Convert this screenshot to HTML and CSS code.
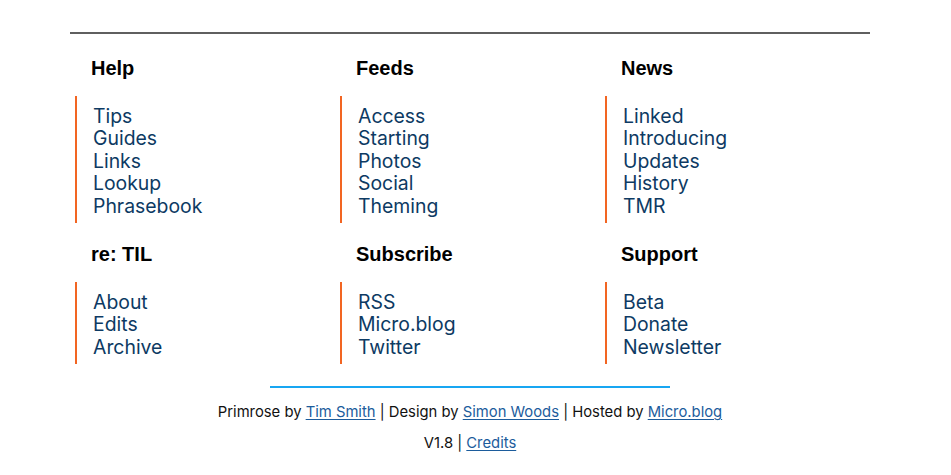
FILE: index.html
```html
<!DOCTYPE html>
<html lang="en">
<head>
<meta charset="utf-8">
<title>Footer</title>
<link rel="stylesheet" href="styles.css">
</head>
<body>
<div class="page">
  <footer class="site-footer">
    <div class="menus">
      <section class="menu">
        <h3 class="menu-title">Help</h3>
        <ul class="menu-list">
          <li><a href="#">Tips</a></li>
          <li><a href="#">Guides</a></li>
          <li><a href="#">Links</a></li>
          <li><a href="#">Lookup</a></li>
          <li><a href="#">Phrasebook</a></li>
        </ul>
      </section>
      <section class="menu">
        <h3 class="menu-title">Feeds</h3>
        <ul class="menu-list">
          <li><a href="#">Access</a></li>
          <li><a href="#">Starting</a></li>
          <li><a href="#">Photos</a></li>
          <li><a href="#">Social</a></li>
          <li><a href="#">Theming</a></li>
        </ul>
      </section>
      <section class="menu">
        <h3 class="menu-title">News</h3>
        <ul class="menu-list">
          <li><a href="#">Linked</a></li>
          <li><a href="#">Introducing</a></li>
          <li><a href="#">Updates</a></li>
          <li><a href="#">History</a></li>
          <li><a href="#">TMR</a></li>
        </ul>
      </section>
      <section class="menu">
        <h3 class="menu-title">re: TIL</h3>
        <ul class="menu-list">
          <li><a href="#">About</a></li>
          <li><a href="#">Edits</a></li>
          <li><a href="#">Archive</a></li>
        </ul>
      </section>
      <section class="menu">
        <h3 class="menu-title">Subscribe</h3>
        <ul class="menu-list">
          <li><a href="#">RSS</a></li>
          <li><a href="#">Micro.blog</a></li>
          <li><a href="#">Twitter</a></li>
        </ul>
      </section>
      <section class="menu">
        <h3 class="menu-title">Support</h3>
        <ul class="menu-list">
          <li><a href="#">Beta</a></li>
          <li><a href="#">Donate</a></li>
          <li><a href="#">Newsletter</a></li>
        </ul>
      </section>
    </div>
    <div class="credits">
      <p class="credit-line">Primrose by <a href="#">Tim Smith</a> | Design by <a href="#">Simon Woods</a> | Hosted by <a href="#">Micro.blog</a></p>
      <p class="credit-line">V1.8 | <a href="#">Credits</a></p>
    </div>
  </footer>
</div>
</body>
</html>
```

FILE: styles.css
```css
html, body {
  margin: 0;
  padding: 0;
  background: #fff;
}

body {
  font-family: Inter, "Noto Sans", sans-serif;
  color: #111;
}

.page {
  width: 940px;
}

.site-footer {
  width: 800px;
  margin: 32px auto 0;
  border-top: 2px solid #5f5f5f;
}

.menus {
  display: grid;
  grid-template-columns: 265px 265px 270px;
  padding-top: 19px;
}

.menu {
  padding-left: 5px;
}

.menu-title {
  margin: 0 0 13px 16px;
  font-family: "Liberation Sans", Arial, sans-serif;
  font-weight: bold;
  font-size: 20px;
  line-height: 30px;
  color: #000;
}

.menu-list {
  list-style: none;
  margin: 0 0 16px;
  padding: 8.5px 0 6px 16px;
  border-left: 2px solid #f26522;
}

.menu-list li {
  font-size: 19.4px;
  line-height: 22.5px;
}

.menu-list a {
  color: #0d3a63;
  text-decoration: none;
}

.credits {
  width: 400px;
  margin: 6px auto 0;
  border-top: 2px solid #18a6f2;
  padding-top: 14px;
  text-align: center;
}

.credit-line {
  margin: 0 -100px 10px;
  font-size: 14.8px;
  line-height: 21px;
  color: #111;
}

.credit-line a {
  color: #1c5c9c;
  text-decoration: underline;
  text-underline-offset: 2px;
}
```
